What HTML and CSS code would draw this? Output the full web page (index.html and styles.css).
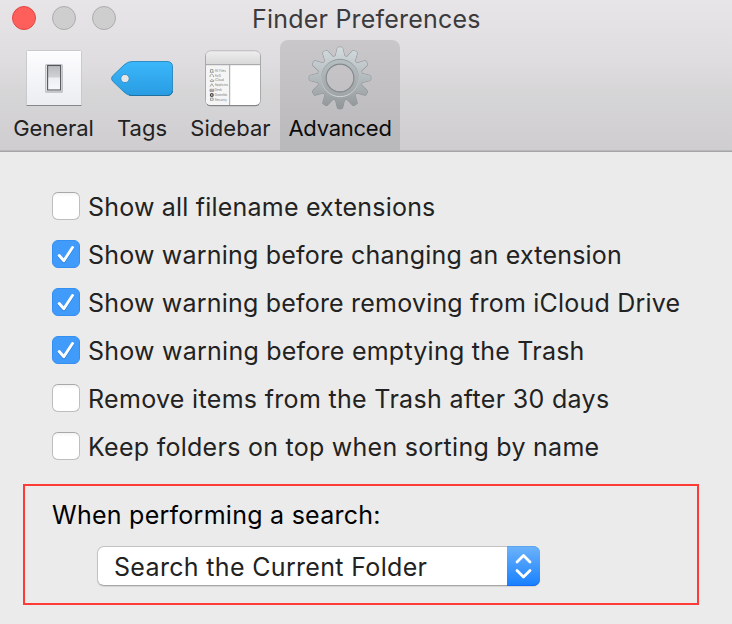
FILE: index.html
```html
<!DOCTYPE html>
<html lang="en">
<head>
<meta charset="utf-8">
<title>Finder Preferences</title>
<link rel="stylesheet" href="styles.css">
</head>
<body>
<header class="toolbar">
  <div class="titlebar">
    <div class="lights"><i class="light close"></i><i class="light"></i><i class="light"></i></div>
    <h1 class="title"><span>Finder Preferences</span></h1>
  </div>
  <nav class="tabs">
    <div class="tab general">
      <svg class="icon" width="64" height="64" viewBox="0 0 64 64">
        <defs>
          <linearGradient id="plate" x2="0" y2="1"><stop stop-color="#fdfdfe"/><stop offset="1" stop-color="#ebedf1"/></linearGradient>
          <linearGradient id="rocker" x2="0" y2="1"><stop stop-color="#b9babd"/><stop offset=".48" stop-color="#d0d1d4"/><stop offset=".5" stop-color="#eceef3"/><stop offset="1" stop-color="#f7f8fb"/></linearGradient>
        </defs>
        <rect x="4.5" y="4.500" width="55" height="55" rx="1" fill="url(#plate)" stroke="#c9cace"/>
        <path d="M4.5 59.5h55" stroke="#85878b"/>
        <rect x="23" y="18" width="18" height="29" rx="1.5" fill="#c6c8cb"/>
        <rect x="24" y="18.5" width="16" height="27" rx="1" fill="#f5f6f8" stroke="#b4b5ba" stroke-width=".6"/>
        <rect x="25.6" y="19.500" width="13" height="24.5" fill="url(#rocker)" stroke="#54565b" stroke-width="1.1"/>
      </svg>
      <span>General</span>
    </div>
    <div class="tab tags">
      <svg class="icon" width="64" height="64" viewBox="0 0 64 64">
        <defs><linearGradient id="tag" x2="0" y2="1"><stop stop-color="#3bb7fb"/><stop offset="1" stop-color="#299ce2"/></linearGradient></defs>
        <path fill-rule="evenodd" d="M22 15.5H57Q62.5 15.5 62.5 21V44Q62.5 49.5 57 49.5H22Q17.500 49.500 14 46L2.500 35Q.5 32.500 2.500 30L14 19Q17.500 15.500 22 15.500ZM15 28.500a4 4 0 1 0 0 8a4 4 0 1 0 0-8Z" fill="url(#tag)" stroke="#2586be" stroke-width=".9"/>
        <circle cx="15" cy="32.500" r="3.600" fill="#e6e6e8"/>
        <path d="M19 49Q20 49.500 22 49.500H57Q62 49.500 62.500 45" fill="none" stroke="#1d71a3"/>
      </svg>
      <span>Tags</span>
    </div>
    <div class="tab sidebar">
      <svg class="icon" width="64" height="64" viewBox="0 0 64 64">
        <defs><linearGradient id="head" x2="0" y2="1"><stop stop-color="#ededed"/><stop offset="1" stop-color="#d8d8d8"/></linearGradient></defs>
        <rect x="5.500" y="5" width="55" height="54.500" rx="5" fill="#fff" stroke="#a9a9ab"/>
        <path d="M6 19V10Q6 5.500 10.500 5.500H55.500Q60 5.500 60 10V19Z" fill="url(#head)"/>
        <path d="M6 19H29.500V59H10.500Q6 59 6 54.500Z" fill="#f5f5f5"/>
        <path d="M6 18.700H60M29.700 19V59" stroke="#9b9b9d" stroke-width=".9"/>
        <path d="M7 58.500Q8.500 59.700 11 59.700H55Q57.500 59.700 59 58.500" fill="none" stroke="#7d7d80"/>
        <g fill="none" stroke="#808080" stroke-width=".7">
          <path d="M10.500 26v-2.500h2.400V26M9.800 26.300h4M10 31v-1.500l1.700-1.500 1.700 1.500V31M10.500 35.500h3q.8-1.500-1-1.500-1.200-1-1.700.4-1.300.2-.3 1.100M10 40.700l1.800-3 1.800 3M10 43.300h3.700v2.200H10zM10 44.400h3.700M10 54.300h3.600M10.500 54v-2h2.600v2"/>
          <circle cx="11.800" cy="49" r="1.400" stroke="#444" stroke-width="1.200"/>
        </g>
        <g class="mini" transform="translate(14.800 0) scale(.3)"><text y="86">All Files</text><text y="102">AirD</text><text y="118">iCloud</text><text y="134">Applictns</text><text y="150">Desk</text><text y="166">Downlds</text><text y="182">Security</text></g>
      </svg>
      <span>Sidebar</span>
    </div>
    <div class="tab advanced">
      <svg class="icon" width="64" height="64" viewBox="-32 -32 64 64">
        <defs>
          <linearGradient id="gear" gradientUnits="userSpaceOnUse" x1="0" y1="-31" x2="0" y2="31"><stop stop-color="#d3dcdf"/><stop offset=".5" stop-color="#b4bbbe"/><stop offset="1" stop-color="#909597"/></linearGradient>
          <linearGradient id="ring" x2="0" y2="1"><stop stop-color="#939a9d"/><stop offset="1" stop-color="#d0d4d5"/></linearGradient>
          <linearGradient id="band" x2="0" y2="1"><stop stop-color="#b4bdc0"/><stop offset="1" stop-color="#a1a6a8"/></linearGradient>
          <path id="teeth" d="M-5-20L-2.700-29.500Q-2.400-30.800-1.500-30.800H1.500Q2.400-30.800 2.700-29.500L5-20ZM-5 20L-2.700 29.500Q-2.400 30.800-1.500 30.800H1.500Q2.400 30.800 2.700 29.500L5 20Z"/>
          <g id="shape"><use href="#teeth"/><use href="#teeth" transform="rotate(30)"/><use href="#teeth" transform="rotate(60)"/><use href="#teeth" transform="rotate(90)"/><use href="#teeth" transform="rotate(120)"/><use href="#teeth" transform="rotate(150)"/><circle r="22.500"/></g>
          <mask id="gearmask"><use href="#shape" fill="#fff"/><circle r="13.500" fill="#000"/></mask>
          <mask id="hole"><rect x="-32" y="-32" width="64" height="64" fill="#fff"/><circle r="13.500" fill="#000"/></mask>
        </defs>
        <g mask="url(#hole)"><use href="#shape" fill="#8d9395" stroke="#8d9395" stroke-width="1"/></g>
        <rect x="-32" y="-32" width="64" height="64" fill="url(#gear)" mask="url(#gearmask)"/>
        <circle r="16.300" fill="none" stroke="url(#band)" stroke-width="5"/>
        <circle r="18.700" fill="none" stroke="url(#ring)" stroke-width="1"/>
        <circle r="13.900" fill="none" stroke="#858b8d" stroke-width="1.200"/>
      </svg>
      <span>Advanced</span>
    </div>
  </nav>
</header>
<main class="content">
  <div class="options">
    <div class="option"><i class="box"></i><span class="t1">Show all filename extensions</span></div>
    <div class="option"><i class="box on"><svg viewBox="0 0 28 28"><path d="M7.200 15.500l4.600 5.300L20.500 7.500"/></svg></i><span class="t2">Show warning before changing an extension</span></div>
    <div class="option"><i class="box on"><svg viewBox="0 0 28 28"><path d="M7.200 15.500l4.600 5.300L20.500 7.500"/></svg></i><span class="t3">Show warning before removing from iCloud Drive</span></div>
    <div class="option"><i class="box on"><svg viewBox="0 0 28 28"><path d="M7.200 15.500l4.600 5.300L20.500 7.500"/></svg></i><span class="t4">Show warning before emptying the Trash</span></div>
    <div class="option"><i class="box"></i><span class="t5">Remove items from the Trash after 30 days</span></div>
    <div class="option"><i class="box"></i><span class="t6">Keep folders on top when sorting by name</span></div>
  </div>
  <section class="search">
    <div class="label"><span>When performing a search:</span></div>
    <div class="select">
      <span class="value">Search the Current Folder</span>
      <span class="stepper"><svg width="33" height="40" viewBox="0 0 33 40"><path d="M10 16l6.500-6.500 6.500 6.500M10 24.500l6.500 6.500 6.500-6.500"/></svg></span>
    </div>
  </section>
</main>
</body>
</html>
```
FILE: styles.css
```css
* { box-sizing: border-box; }
body {
  margin: 0;
  width: 732px;
  height: 624px;
  overflow: hidden;
  background: #ebebeb;
  color: #222;
  font-family: Inter, "Liberation Sans", sans-serif;
  font-size: 25px;
  white-space: nowrap;
}
.toolbar {
  height: 152px;
  background: linear-gradient(#e7e5e8 0, #dfdde0 60px, #d7d6d7 90px, #cfcdd0 150px);
  border-bottom: 1px solid #a6a5a7;
  box-shadow: inset 0 -1px #b9b8ba;
}
.titlebar { display: grid; grid-template-columns: 252px 1fr; height: 40px; }
.lights { display: flex; gap: 16px; padding: 6px 0 0 12px; }
.light {
  width: 24px;
  height: 24px;
  border-radius: 50%;
  background: #cecece;
  border: 1px solid #adadad;
}
.close { background: #ff5f5b; border-color: #df4744; }
.title {
  margin: 0;
  font-size: 25px;
  font-weight: 400;
  letter-spacing: .21px;
  line-height: 38px;
  color: #3b3a3c;
}
.tabs { display: flex; height: 110px; }
.tab {
  display: flex;
  flex-direction: column;
  align-items: center;
  padding-top: 6px;
  font-size: 22px;
  line-height: 28px;
}
.icon { display: block; margin-bottom: 4px; }
.general { width: 107px; letter-spacing: -.05px; }
.tags { width: 70px; }
.sidebar { width: 103px; padding-left: 4px; letter-spacing: .05px; }
.sidebar .icon { margin-left: 2px; }
.advanced {
  width: 120px;
  color: #0c0c0c;
  letter-spacing: -.25px;
  background: linear-gradient(#c9c7ca, #b9b8ba);
  border-radius: 8px 8px 0 0;
}
.mini { letter-spacing: 0; }
.mini text { font-size: 10px; fill: #777; }
.content { padding: 31px 23px 0; }
.options { padding-left: 29px; }
.option { display: flex; align-items: center; gap: 8px; height: 48px; }
.box {
  width: 28px;
  height: 28px;
  margin-bottom: 2px;
  border: 1px solid #bebebe;
  border-top-color: #a8a8a8;
  border-radius: 6px;
  background: linear-gradient(#f4f4f4, #fff 4px);
}
.box.on { border-color: #348ff1; background: #419bfa; }
.box svg { display: block; width: 28px; height: 28px; margin: -1px; filter: drop-shadow(0 1px .5px #2277d1); }
.box path {
  fill: none;
  stroke: #fff;
  stroke-width: 2.9;
  stroke-linecap: round;
  stroke-linejoin: round;
}
.t1, .t2 { letter-spacing: .2px; }
.t3 { letter-spacing: .2px; }
.t4 { letter-spacing: .24px; }
.t5 { letter-spacing: .32px; }
.t6 { letter-spacing: .27px; }
.search {
  width: 676px;
  height: 121px;
  margin-top: 13px;
  padding: 11px 0 0 27px;
  border: 2px solid #ff3b38;
}
.label { line-height: 36px; color: #000; letter-spacing: .26px; }
.select {
  display: flex;
  width: 443px;
  height: 40px;
  margin: 13px 0 0 45px;
  border: 1px solid #c3c3c3;
  border-bottom-color: #a7a7a7;
  border-radius: 7px;
  background: #fff;
  box-shadow: 0 1px 1px #d3d3d3;
}
.value { flex: 1; padding-left: 16px; line-height: 40px; letter-spacing: .33px; }
.stepper {
  width: 33px;
  height: 40px;
  margin: -1px;
  border-radius: 0 7px 7px 0;
  background: linear-gradient(#6db3fa, #1780ff);
  box-shadow: inset 0 1px #5ba5ee, inset 0 -1px #146df2;
}
.stepper svg { display: block; }
.stepper path {
  fill: none;
  stroke: #fff;
  stroke-width: 2.800;
  stroke-linecap: round;
  stroke-linejoin: round;
}
```
